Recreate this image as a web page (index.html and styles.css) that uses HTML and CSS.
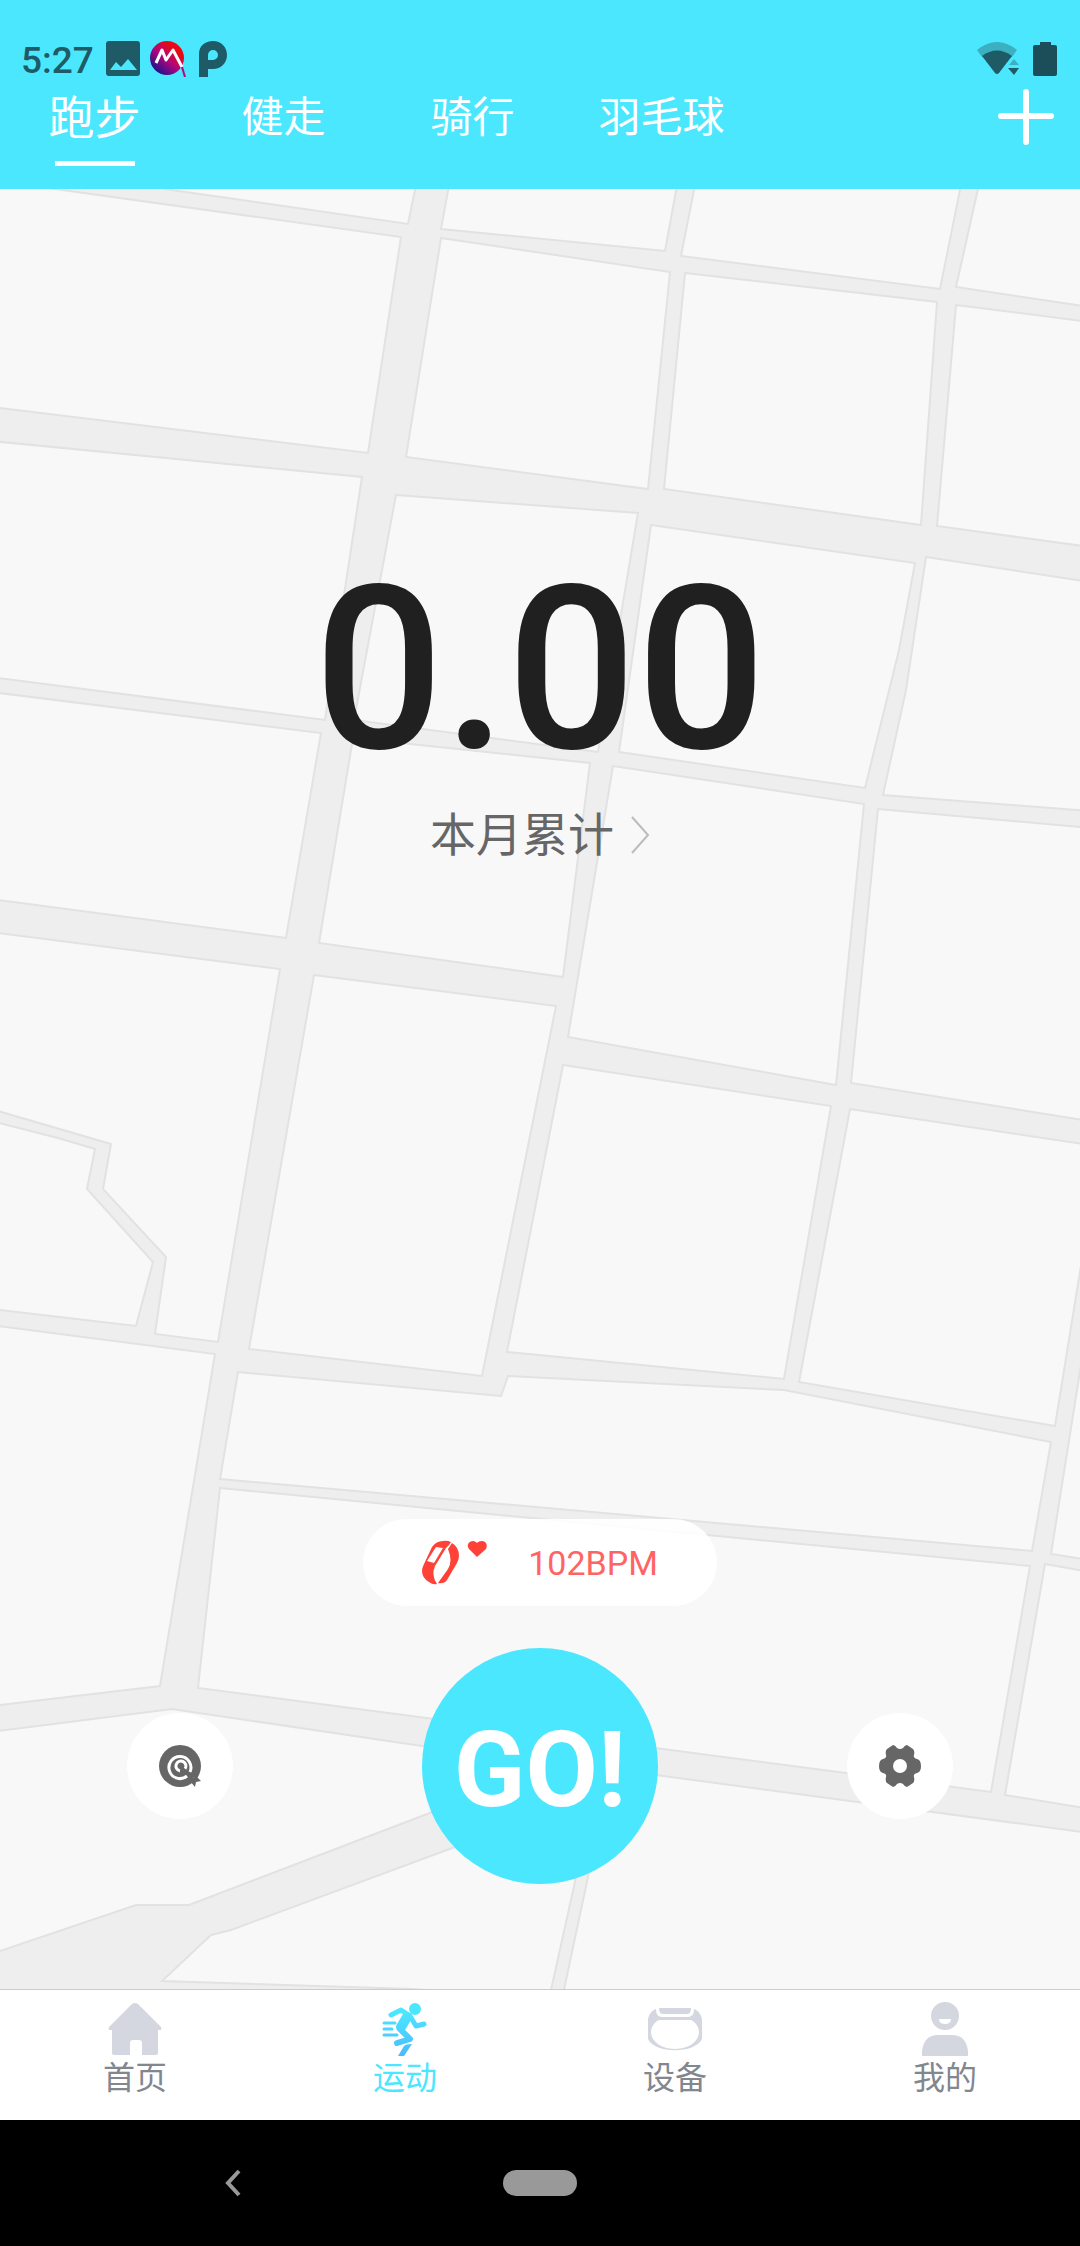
FILE: index.html
```html
<!DOCTYPE html>
<html lang="zh-CN">
<head>
    <meta charset="UTF-8">
    <title>运动</title>
    <meta name="viewport" content="width=device-width, initial-scale=1.0">
    <link rel="stylesheet" href="styles.css">
</head>
<body>
    <header>
        <div class="status-bar">
            <span class="time">5:27</span>
            <svg class="status-icon" width="36" height="36" viewBox="0 0 36 36">
                <path fill="#1e5b66" fill-rule="evenodd" d="M4 0h28q3 0 3 3v29q0 3-3 3H4q-3 0-3-3V3q0-3 3-3zM5 29h27l-9-11-7 8-5-5z"/>
            </svg>
            <svg class="status-icon" width="36" height="36" viewBox="0 0 36 36">
                <defs>
                    <linearGradient id="logo" x1="0.1" y1="0.9" x2="0.8" y2="0.1">
                        <stop offset="0" stop-color="#0a1490"/>
                        <stop offset="0.5" stop-color="#b4057c"/>
                        <stop offset="0.85" stop-color="#e80a14"/>
                    </linearGradient>
                </defs>
                <circle cx="17" cy="17" r="17" fill="url(#logo)"/>
                <path d="M6 22 12 9l4 10 7-10 9 17" fill="none" stroke="#fff" stroke-width="3" stroke-linejoin="round"/>
                <path d="M32 26l3 10" fill="none" stroke="#b4057c" stroke-width="2"/>
            </svg>
            <svg class="status-icon" width="36" height="36" viewBox="-4 0 36 36">
                <path fill="#1e5b66" fill-rule="evenodd" d="M0 36V13C0 5 6 0 14 0s14 6 14 14-6 14-14 14H9v8zM9 19h5a5 5 0 1 0-5-5z"/>
            </svg>
            <span class="status-right">
                <svg width="42" height="34" viewBox="0 0 42 34">
                    <path fill="#3bb0c1" d="M0 8Q20-8 40 8l-5 7H5z"/>
                    <path fill="#1e5b66" d="M5 14q15-11 30 0L22 31q-2 2-4 0z"/>
                    <path fill="#3bb0c1" d="M32 23l5-6 5 6z"/>
                    <path fill="#1e5b66" d="M31 26h11l-5 7z"/>
                </svg>
                <svg width="24" height="34" viewBox="0 0 24 34">
                    <path fill="#1b4e59" d="M7 0h11v3h4q2 0 2 2v27q0 2-2 2H2q-2 0-2-2V5q0-2 2-2h5z"/>
                </svg>
            </span>
        </div>
        <nav class="tabs">
            <a class="tab active" href="#run">跑步</a>
            <a class="tab" href="#walk">健走</a>
            <a class="tab" href="#ride">骑行</a>
            <a class="tab" href="#badminton">羽毛球</a>
            <button class="add" type="button" aria-label="添加">
                <svg width="56" height="56" viewBox="0 0 56 56">
                    <path d="M28 3v50M3 27h50" stroke="#fff" stroke-width="6" stroke-linecap="round"/>
                </svg>
            </button>
        </nav>
    </header>

    <main>
        <!-- street map, every polygon is one block between the roads -->
        <svg class="map" viewBox="0 189 1080 1800" preserveAspectRatio="xMidYMid slice" aria-hidden="true">
            <polygon points="160,180 165,189 408,224 417,180"/>
            <polygon points="-9,180 55,189 401,237 368,453 -9,407"/>
            <polygon points="450,180 441,229 665,251 678,180"/>
            <polygon points="696,180 681,256 940,289 962,180"/>
            <polygon points="980,180 956,287 1090,307 1090,180"/>
            <polygon points="441,238 670,272 648,489 406,457"/>
            <polygon points="685,273 937,302 921,525 664,489"/>
            <polygon points="956,305 1090,322 1090,547 937,526"/>
            <polygon points="-9,441 362,477 325,720 -9,677"/>
            <polygon points="396,495 638,513 598,752 354,720"/>
            <polygon points="651,525 915,563 899,650 865,788 619,752"/>
            <polygon points="926,557 1090,582 1090,811 883,795 906,690"/>
            <polygon points="-9,692 321,733 286,938 -9,899"/>
            <polygon points="353,738 590,763 563,977 319,943"/>
            <polygon points="613,766 864,804 836,1085 568,1037"/>
            <polygon points="878,809 1090,828 1090,1121 851,1083"/>
            <polygon points="-9,932 280,969 218,1342 155,1334 166,1257 103,1189 111,1144 -9,1109"/>
            <polygon points="-9,1121 58,1138 95,1149 87,1189 153,1262 136,1326 -9,1309"/>
            <polygon points="314,975 556,1006 482,1376 249,1349"/>
            <polygon points="563,1065 831,1106 784,1379 507,1352"/>
            <polygon points="850,1109 1090,1145 1090,1210 1055,1426 799,1382"/>
            <polygon points="1090,1308 1051,1554 1090,1560"/>
            <polygon points="-9,1325 215,1354 160,1686 -9,1706"/>
            <polygon points="238,1372 501,1396 508,1376 784,1390 1051,1442 1032,1551 220,1479"/>
            <polygon points="220,1488 1030,1566 991,1792 198,1688"/>
            <polygon points="1045,1564 1090,1572 1090,1809 1005,1795"/>
            <polygon points="-9,1732 172,1709 490,1756 490,1790 189,1905 136,1905 -9,1954"/>
            <polygon points="611,1769 1090,1833 1090,1999 562,1999"/>
            <polygon points="211,1935 231,1930 455,1847 560,1805 592,1805 549,1999 413,1989 162,1981"/>
        </svg>

        <section class="summary">
            <div class="distance">0.00</div>
            <a class="total" href="#month">本月累计
                <svg width="20" height="40" viewBox="0 0 20 40">
                    <path d="M2 2l16 18L2 38" fill="none" stroke="#bcbcbc" stroke-width="2"/>
                </svg>
            </a>
        </section>

        <section class="controls">
            <div class="heart-rate">
                <svg width="66" height="46" viewBox="0 0 66 46">
                    <path fill="#ff4138" fill-rule="evenodd" d="M21 1q4-1 8 1l-2 3-3 3L13 26q-4 9 2 18-4 1-8-2Q0 38 0 31q0-3 2-7L10 7q4-6 11-6zM14 7l7 1-9 15-7-2z"/>
                    <path fill="#ff4138" d="M30 3q7 4 7 13 0 3-2 7L25 40q-3 4-9 3l10-14q5-8 0-20z"/>
                    <path fill="#ff4138" d="M55 17l-8-8c-3-4 0-8 4-8 2 0 3 1 4 2 1-1 2-2 5-2 4 0 6 4 4 8z"/>
                </svg>
                <span>102BPM</span>
            </div>
            <div class="actions">
                <button class="round" type="button" aria-label="目标">
                    <svg width="42" height="42" viewBox="0 0 42 42">
                        <circle cx="21" cy="21" r="21" fill="#666"/>
                        <path fill="#fff" d="M35 42l1-5-4-5 10 2v8z"/>
                        <path d="M31 27A11 11 0 1 0 28 31" fill="none" stroke="#fff" stroke-width="3"/>
                        <path d="M26 24A5 5 0 1 0 21 26" fill="none" stroke="#fff" stroke-width="3"/>
                        <path d="M21 21l15 15" stroke="#666" stroke-width="3"/>
                        <path fill="#666" d="M31 36l5 6 1-5 5-1-5-5z"/>
                    </svg>
                </button>
                <button class="go" type="button">GO!</button>
                <button class="round" type="button" aria-label="设置">
                    <svg width="42" height="42" viewBox="0 0 42 42">
                        <path fill="#666" fill-rule="evenodd" d="M14 0q2 0 4 3 3 2 6 0 2-3 4-3l6 4q2 2 1 6-1 3 3 4 4 1 4 7t-4 7q-4 1-3 4 1 4-1 6l-6 4q-2 0-4-3-3-2-6 0-2 3-4 3l-6-4q-2-2-1-6 1-3-3-4-4-1-4-7t4-7q4-1 3-4-1-4 1-6zM21 14a7 7 0 1 0 0 14 7 7 0 0 0 0-14z"/>
                    </svg>
                </button>
            </div>
        </section>
    </main>

    <nav class="bottom-nav">
        <a href="#home">
            <svg width="54" height="54" viewBox="0 0 54 54">
                <path fill="#d4d7df" d="M24 2q3-2 6 0l22 22q2 2 1 4h-3v23q0 2-2 2H34V41q0-3-3-3h-6q-3 0-3 3v12H6q-2 0-2-2V28H1q-1-2 1-4z"/>
            </svg>
            首页
        </a>
        <a class="active" href="#sport">
            <svg width="54" height="54" viewBox="0 0 54 54">
                <defs>
                    <linearGradient id="runner" gradientUnits="userSpaceOnUse" x1="0" y1="0" x2="0" y2="54">
                        <stop offset="0.2" stop-color="#4be7ff"/>
                        <stop offset="1" stop-color="#4bb9ff"/>
                    </linearGradient>
                </defs>
                <circle cx="37" cy="7" r="6" fill="url(#runner)"/>
                <g fill="none" stroke="url(#runner)" stroke-linecap="round" stroke-linejoin="round">
                    <path stroke-width="5" d="M13 13l10-5 9 6 6 10 8-2"/>
                    <path stroke-width="10" d="M29 15l-6 10"/>
                    <path stroke-width="6" d="M22 27l10 10-13 4"/>
                    <path stroke-width="3" d="M6 21h11M6 27h8M6 33h13"/>
                </g>
                <path fill="url(#runner)" d="M26 44q1-2 8-2l-8 12h-6z"/>
            </svg>
            运动
        </a>
        <a href="#device">
            <svg width="54" height="54" viewBox="0 0 54 54">
                <path fill="#d4d7df" fill-rule="evenodd" d="M8 7C3 9 1 13 0 17v20c7 15 47 15 54 0V17c-1-4-3-8-8-10q0 8-6 8H14q-6 0-6-8zM11 18h32c14 7 10 28-16 29C1 46-3 25 11 18z"/>
                <path fill="#d4d7df" d="M11 6h32q0 6-4 6H15q-4 0-4-6z"/>
            </svg>
            设备
        </a>
        <a href="#me">
            <svg width="54" height="54" viewBox="0 0 54 54">
                <path fill="#d4d7df" fill-rule="evenodd" d="M27 0a14 14 0 1 1 0 28 14 14 0 0 1 0-28zM21 17q0 5 6 5t6-5z"/>
                <path fill="#d4d7df" d="M4 54V49Q6 33 20 33H34q14 0 16 16v5z"/>
            </svg>
            我的
        </a>
    </nav>

    <footer>
        <button class="back" type="button" aria-label="返回">
            <svg width="18" height="28" viewBox="0 0 18 28">
                <path d="M16 2L5 14l11 12" fill="none" stroke="#999" stroke-width="4"/>
            </svg>
        </button>
        <button class="home-pill" type="button" aria-label="主屏幕"></button>
    </footer>
</body>
</html>
```
FILE: styles.css
```css
*{
  box-sizing: border-box;
}
body{
  margin: 0;
  min-height: 100vh;
  display: flex;
  flex-direction: column;
  font-family: Roboto, "Noto Sans CJK SC", sans-serif;
  background-color: #fff;
}
a{
  text-decoration: none;
}
button{
  border: none;
  padding: 0;
  background: none;
  font-family: inherit;
  cursor: pointer;
}
svg{
  display: block;
}

/* header */
header{
  background-color: #4be7ff;
}
.status-bar{
  display: flex;
  align-items: center;
  height: 80px;
  padding: 38px 23px 0 21px;
}
.time{
  font-size: 37px;
  font-weight: 500;
  line-height: 38px;
  padding-top: 4px;
  color: #1e5b66;
  margin-right: 2px;
}
.status-icon{
  margin-left: 9px;
}
.status-right{
  display: flex;
  gap: 14px;
  margin-left: auto;
}
.tabs{
  display: flex;
  height: 109px;
}
.tab{
  width: 17.5%;
  display: flex;
  flex-direction: column;
  align-items: center;
  color: #fff;
  font-size: 42px;
  line-height: 76px;
}
.tab.active{
  font-size: 46px;
}
.tab.active::after{
  content: "";
  width: 80px;
  height: 5px;
  margin-top: 5px;
  background-color: #fff;
}
.add{
  margin: 0 26px 36px auto;
}

/* map */
main{
  flex: 1;
  position: relative;
  display: flex;
  flex-direction: column;
  justify-content: space-between;
  background-color: #eee;
}
.map{
  position: absolute;
  top: 0;
  left: 0;
  width: 100%;
  height: 100%;
}
.map polygon{
  fill: #f8f8f8;
  stroke: #e2e2e2;
  stroke-width: 2;
}
.summary{
  position: relative;
  display: flex;
  flex-direction: column;
  align-items: center;
  padding-top: 366px;
}
.distance{
  font-size: 228px;
  font-weight: 500;
  line-height: 230px;
  color: #202020;
}
.total{
  display: flex;
  align-items: center;
  gap: 16px;
  font-size: 46px;
  line-height: 68px;
  margin-top: 16px;
  color: #666;
}

/* buttons */
.controls{
  position: relative;
  padding-bottom: 105px;
}
.heart-rate{
  display: flex;
  align-items: center;
  justify-content: center;
  gap: 40px;
  width: 354px;
  height: 87px;
  margin: 0 auto 42px;
  border-radius: 44px;
  background-color: rgba(255,255,255,0.9);
  color: #ff6464;
  font-size: 34px;
}
.actions{
  display: grid;
  grid-template-columns: 1fr 1fr 1fr;
  align-items: center;
  justify-items: center;
}
.round{
  display: flex;
  align-items: center;
  justify-content: center;
  width: 106px;
  height: 106px;
  border-radius: 50%;
  background-color: #fff;
}
.go{
  width: 236px;
  height: 236px;
  padding-top: 8px;
  border-radius: 50%;
  background-color: #4be7ff;
  color: #fff;
  font-size: 105px;
  font-weight: bold;
}

/* bottom nav */
.bottom-nav{
  display: grid;
  grid-template-columns: 1fr 1fr 1fr 1fr;
  height: 131px;
  border-top: 1px solid #ccc;
  background-color: #fff;
}
.bottom-nav a{
  display: flex;
  flex-direction: column;
  align-items: center;
  padding-top: 12px;
  font-size: 32px;
  line-height: 44px;
  color: #82868e;
}
.bottom-nav a.active{
  color: #4be7ff;
}

footer{
  display: grid;
  grid-template-columns: 43% 14% 43%;
  align-items: center;
  justify-items: center;
  height: 126px;
  background-color: #000;
}
.home-pill{
  width: 74px;
  height: 26px;
  border-radius: 13px;
  background-color: #999;
}
```
